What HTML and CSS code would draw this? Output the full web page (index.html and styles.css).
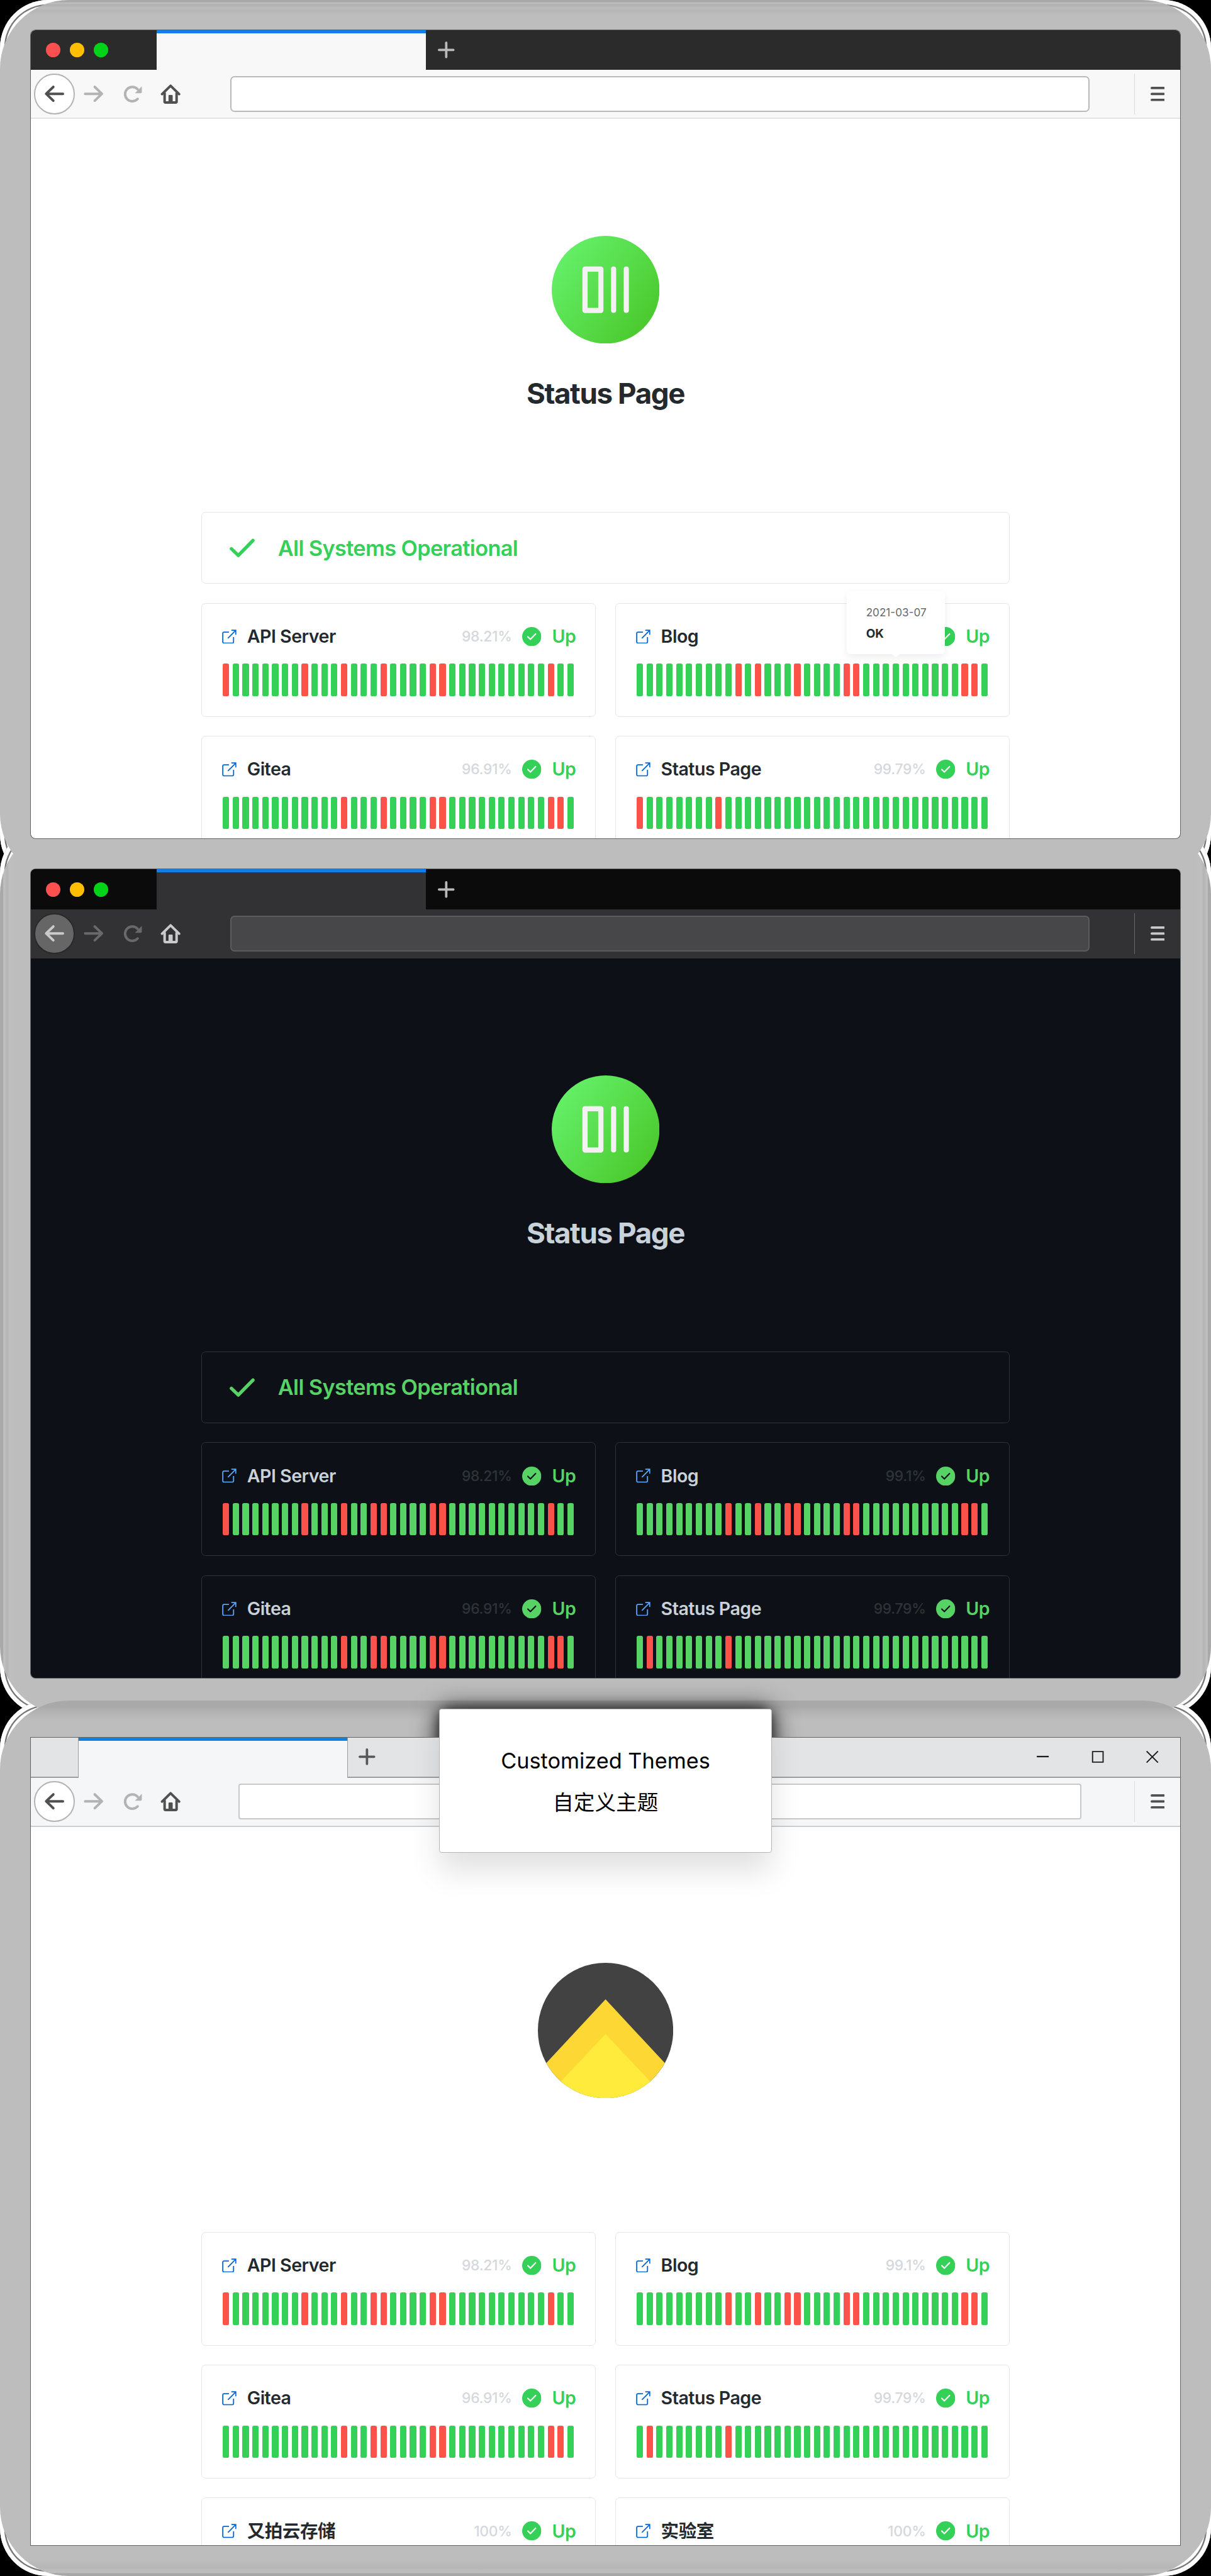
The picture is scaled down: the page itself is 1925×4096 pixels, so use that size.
FILE: index.html
```html
<!DOCTYPE html>
<html lang="en">
<head>
<meta charset="utf-8">
<title>Status Page</title>
<link rel="stylesheet" href="styles.css">
</head>
<body>
<svg class="defs" width="0" height="0">
  <defs>
    <linearGradient id="lime" x1="0.05" y1="0.2" x2="0.9" y2="0.85">
      <stop offset="0" stop-color="#64f069"/><stop offset="0.5" stop-color="#58dd4b"/><stop offset="1" stop-color="#4bc92d"/>
    </linearGradient>
    <clipPath id="disc"><circle cx="113" cy="113" r="113"/></clipPath>
    <symbol id="plus" viewBox="0 0 28 28"><path d="M14 2v24M2 14h24" fill="none" stroke="currentColor" stroke-width="4" stroke-linecap="round"/></symbol>
    <symbol id="back" viewBox="0 0 34 34"><path d="M15.500 5.500 3.500 17 15.500 28.500M4 17h27.500" fill="none" stroke="currentColor" stroke-width="4.200" stroke-linecap="round" stroke-linejoin="round"/></symbol>
    <symbol id="forward" viewBox="0 0 34 34"><path d="M18.500 5.500 30.500 17 18.500 28.500M30 17H2.500" fill="none" stroke="currentColor" stroke-width="4.200" stroke-linecap="round" stroke-linejoin="round"/></symbol>
    <symbol id="reload" viewBox="0 0 34 34"><path d="M25 9.500A12 12 0 1 0 25 25.500" fill="none" stroke="currentColor" stroke-width="4.200" stroke-linecap="round"/><path d="M32 4.500V14a2 2 0 0 1-2 2H20.500z" fill="currentColor"/></symbol>
    <symbol id="home" viewBox="0 0 34 34"><path d="M2.800 17.500 17 3.500 31.200 17.500" fill="none" stroke="currentColor" stroke-width="4.200" stroke-linecap="round" stroke-linejoin="round"/><path d="M7 15v15a1.500 1.500 0 0 0 1.500 1.500h17A1.500 1.500 0 0 0 27 30V15" fill="none" stroke="currentColor" stroke-width="4.200"/><path d="M13.500 31V20.500a1.500 1.500 0 0 1 1.500-1.500h4a1.500 1.500 0 0 1 1.500 1.500V31z" fill="currentColor"/></symbol>
    <symbol id="menu" viewBox="0 0 24 24"><path d="M2 2h20M2 12h20M2 22h20" fill="none" stroke="currentColor" stroke-width="4" stroke-linecap="round"/></symbol>
    <symbol id="external" viewBox="0 0 24 24"><path d="M11.500 4.300H3.500a2.300 2.300 0 0 0-2.300 2.300v13.900a2.300 2.300 0 0 0 2.300 2.300h13.400a2.300 2.300 0 0 0 2.300-2.300V12.500M9.800 14.600 22.800 1.500M15.500 1.200h7.500v7.500" fill="none" stroke="currentColor" stroke-width="1.900"/></symbol>
    <symbol id="tick" viewBox="0 0 42 32"><path d="M3 17.500 14.500 28.500 39 3.500" fill="none" stroke="currentColor" stroke-width="5.600" stroke-linecap="round" stroke-linejoin="round"/></symbol>
    <symbol id="badge" viewBox="0 0 32 32"><circle cx="16" cy="16" r="16" fill="currentColor"/><path d="M9.500 16.300 13.800 20.500 22.500 11.500" fill="none" stroke="var(--page)" stroke-width="2.300" stroke-linecap="round" stroke-linejoin="round"/></symbol>
    <symbol id="brand" viewBox="0 0 180 180"><circle cx="90" cy="90" r="90" fill="url(#lime)"/><rect x="55.600" y="55.600" width="26.400" height="69" fill="none" stroke="#f3f1f4" stroke-width="8.700" stroke-linejoin="round"/><path d="M103.300 55.500v69M124.500 55.500v69" stroke="#f3f1f4" stroke-width="8.600" stroke-linecap="round"/></symbol>
    <symbol id="peak" viewBox="0 0 226 226"><g clip-path="url(#disc)"><path d="M0 0h226v226H0z" fill="#424242"/><path d="M113 61 273 233H-47z" fill="#fdd835"/><path d="M113 119 223 236H3z" fill="#ffeb3b"/></g></symbol>
  </defs>
</svg>
<main>
  <section class="frame frame-first">
    <div class="window light">
      <div class="tabs">
        <div class="tabs-lead"><i class="dot red"></i><i class="dot amber"></i><i class="dot green"></i></div>
        <div class="tab"></div>
        <div class="tabs-rest"><svg class="plus"><use href="#plus"/></svg></div>
      </div>
      <div class="toolbar">
        <div class="nav"><span class="back"><svg><use href="#back"/></svg></span><svg class="dim"><use href="#forward"/></svg><svg class="dim"><use href="#reload"/></svg><svg><use href="#home"/></svg></div>
        <div class="address"></div>
        <div class="menu"><svg><use href="#menu"/></svg></div>
      </div>
      <div class="page">
        <svg class="logo"><use href="#brand"/></svg>
        <h1>Status Page</h1>
        <div class="summary"><svg><use href="#tick"/></svg><span>All Systems Operational</span></div>
        <div class="cards" data-set="recent"></div>
      </div>
    </div>
  </section>
  <section class="frame frame-middle">
    <div class="window dark">
      <div class="tabs">
        <div class="tabs-lead"><i class="dot red"></i><i class="dot amber"></i><i class="dot green"></i></div>
        <div class="tab"></div>
        <div class="tabs-rest"><svg class="plus"><use href="#plus"/></svg></div>
      </div>
      <div class="toolbar">
        <div class="nav"><span class="back"><svg><use href="#back"/></svg></span><svg class="dim"><use href="#forward"/></svg><svg class="dim"><use href="#reload"/></svg><svg><use href="#home"/></svg></div>
        <div class="address"></div>
        <div class="menu"><svg><use href="#menu"/></svg></div>
      </div>
      <div class="page">
        <svg class="logo"><use href="#brand"/></svg>
        <h1>Status Page</h1>
        <div class="summary"><svg><use href="#tick"/></svg><span>All Systems Operational</span></div>
        <div class="cards" data-set="full"></div>
      </div>
    </div>
  </section>
  <section class="frame frame-last">
    <div class="window light flat">
      <div class="tabs">
        <div class="tabs-lead"></div>
        <div class="tab"></div>
        <div class="tabs-rest"><svg class="plus"><use href="#plus"/></svg>
          <svg class="controls" viewBox="0 0 204 20"><path d="M0 9.500h20" stroke-width="2.400"/><path d="M93.200 1.200h17.600v17.600H93.200z"/><path d="M183.500 .500 202.500 19.500M202.500 .500 183.500 19.500"/></svg>
        </div>
      </div>
      <div class="toolbar">
        <div class="nav"><span class="back"><svg><use href="#back"/></svg></span><svg class="dim"><use href="#forward"/></svg><svg class="dim"><use href="#reload"/></svg><svg><use href="#home"/></svg></div>
        <div class="address"></div>
        <div class="menu"><svg><use href="#menu"/></svg></div>
      </div>
      <div class="page">
        <svg class="logo"><use href="#peak"/></svg>
        <div class="cards" data-set="full"></div>
      </div>
    </div>
    <div class="note"><p>Customized Themes</p><p class="zh">自定义主题</p></div>
  </section>
</main>
<script src="cards.js"></script>
</body>
</html>
```
FILE: styles.css
```css
/* 1rem is ten design units */
html { font-size: 9.5203px; }
* { box-sizing: border-box; margin: 0; }
body {
  background: #000;
  font-family: Inter, "Noto Sans CJK SC", sans-serif;
  width: 202.2rem;
  height: 4096px;
  overflow: hidden;
}
.defs { position: absolute; }
svg { display: block; flex: none; }
main {
  position: relative;
  z-index: 0;
  display: flex;
  flex-direction: column;
  padding: 5rem 5.1rem 0;
  height: 4096px;
}
.frame { position: relative; }
.frame-first { margin-bottom: 5.2rem; }
.frame-middle { margin-bottom: 10rem; }

/* halo round each window: a grey plate over a pale rim */
.frame::before, .frame::after {
  content: "";
  position: absolute;
  left: -5.1rem;
  right: -5.1rem;
  top: -6.2rem;
  bottom: -6.2rem;
}
.frame::after { z-index: -2; background: #fff; border-radius: 8rem; box-shadow: inset 0 0 0 .7rem #fff, inset 0 0 0 .95rem #777; }
.frame::before {
  z-index: -1;
  border-radius: 11.5rem;
  background:
    linear-gradient(to right, #aaa 0, #a8a8a8 .5rem, #c2c2c2 .6rem, #b4b4b4 1.2rem, #bfbfbf 1.6rem, rgba(189,189,189,0) 2.6rem, rgba(189,189,189,0) calc(100% - 2.6rem), #bfbfbf calc(100% - 1.6rem), #b4b4b4 calc(100% - 1.2rem), #c2c2c2 calc(100% - .6rem), #a8a8a8 calc(100% - .5rem), #aaa 100%),
    #bdbdbd;
}
.frame-first::before, .frame-first::after { top: -5rem; bottom: -7.4rem; }
.frame-middle::before, .frame-middle::after { top: -7.4rem; }
.frame-last::before, .frame-last::after { bottom: -5.1rem; }
.frame-first::before {
  background: linear-gradient(#a8a8a8 0, #a8a8a8 .3rem, #c0c0c0 .5rem, #b0b0b0 .8rem, #bcbcbc 1.3rem, #b6b6b6 1.8rem, #bdbdbd 2.6rem, #bdbdbd);
}
.frame-last::before {
  background: linear-gradient(#a9a9a9 1rem, #b2b2b2 1.8rem, #bdbdbd 3.4rem, #bdbdbd calc(100% - 2.6rem), #b6b6b6 calc(100% - 1.4rem), #c0c0c0 calc(100% - .6rem), #a8a8a8 calc(100% - .4rem));
}

.window {
  height: 135rem;
  overflow: hidden;
  background: var(--page);
  box-shadow: 0 0 0 1px #636363;
  border-radius: .8rem;
}
.flat { height: 134.9rem; border-radius: 0; }
.light {
  --page: #fff; --text: #24292e; --ok: #34d058; --bad: #fb524a; --line: #e3e5e8;
  --faint: #d5d8dc; --link: #0366d6; --strip: #2b2b2b; --bar: #f8f8f8; --edge: #e3e3e3;
  --field: #fff; --field-line: #b9b9b9; --icon: #505050; --icon-dim: #b3b3b3;
  --back: #fff; --back-line: #b3b3b3; --plus: #b9b9b9;
}
.dark {
  --page: #0d1117; --text: #c9d1d9; --ok: #56d364; --bad: #f9524a; --line: #2e3338;
  --faint: #2e3338; --link: #58a6ff; --strip: #0b0b0b; --bar: #323234; --edge: #323234;
  --field: #474749; --field-line: #5c5c5e; --icon: #cacaca; --icon-dim: #69696a;
  --back: #666; --back-line: #29292a; --plus: #b9b9b9;
}
.flat {
  --strip: #e2e4e5; --bar: #f5f6f8; --edge: #cdcdcd; --field-line: #c8c8c8; --plus: #57585a;
}

.tabs { display: flex; height: 6.7rem; }
.tabs-lead { width: 21.1rem; background: var(--strip); display: flex; align-items: center; gap: 1.6rem; padding-left: 2.6rem; }
.dot { width: 2.4rem; height: 2.4rem; border-radius: 50%; }
.red { background: #ff5050; }
.amber { background: #ffbf00; }
.green { background: #00d318; }
.tab { width: 44.9rem; background: var(--bar); border-top: 5px solid #1080e8; }
.tabs-rest { flex: 1; background: var(--strip); display: flex; align-items: center; justify-content: space-between; padding: 0 3.5rem 0 2rem; }
.plus { width: 2.8rem; height: 2.8rem; color: var(--plus); }
.controls { width: 20.4rem; height: 2rem; fill: none; stroke: #1c1c1c; stroke-width: 2; }
.flat .tabs-lead { width: 8rem; border-bottom: 2px solid #9a9fa2; border-right: 1px solid #9a9fa2; }
.flat .tabs-rest { border-bottom: 2px solid #9a9fa2; border-left: 1px solid #9a9fa2; padding-left: 1.8rem; padding-right: 3.6rem; }

.toolbar { display: flex; align-items: center; height: 8.2rem; background: var(--bar); border-bottom: 2px solid var(--edge); }
.nav { width: 33.3rem; display: flex; align-items: center; padding-left: .6rem; color: var(--icon); }
.nav svg { width: 3.4rem; height: 3.4rem; }
.nav > svg { margin-left: 2.95rem; }
.nav > .back + svg { margin-left: 1.5rem; }
.nav > .dim + .dim { margin-left: 3.05rem; }
.nav > .dim { color: var(--icon-dim); }
.back { width: 6.8rem; height: 6.8rem; border-radius: 50%; border: 2px solid var(--back-line); background: var(--back); display: flex; align-items: center; justify-content: center; }
.address { width: 143.5rem; height: 6rem; border: 2px solid var(--field-line); border-radius: .7rem; background: var(--field); }
.flat .nav { width: 34.7rem; }
.flat .address { width: 140.8rem; border-radius: .4rem; }
.menu { margin-left: auto; width: 7.75rem; height: 6.8rem; border-left: 1px solid #dadada; display: flex; align-items: center; justify-content: center; color: var(--icon); }
.dark .menu { border-color: #68686a; }
.menu svg { width: 2.4rem; height: 2.4rem; }

.page { width: 135rem; margin: 0 auto; display: flex; flex-direction: column; align-items: center; padding-top: 19.5rem; }
.logo { width: 18rem; height: 18rem; }
.flat .page { padding-top: 22.75rem; }
.flat .logo { width: 22.6rem; height: 22.6rem; margin-bottom: 22.3rem; }
h1 { font-size: 4.8rem; line-height: 5.8rem; font-weight: 700; letter-spacing: -.031em; color: var(--text); margin: 5.4rem 0 16.9rem; }
.summary { width: 100%; height: 12rem; border: 1px solid var(--line); border-radius: .7rem; display: flex; align-items: center; padding-left: 4.6rem; gap: 3.9rem; color: var(--ok); font-size: 3.6rem; font-weight: 600; letter-spacing: -.018em; margin-bottom: 3.2rem; }
.summary svg { width: 4.2rem; height: 3.2rem; }
.cards { width: 100%; display: grid; grid-template-columns: 1fr 1fr; gap: 3.2rem; }
.card { position: relative; height: 19rem; border: 1px solid var(--line); border-radius: .7rem; padding-top: 3.7rem; }
.card-head { height: 3.6rem; display: flex; align-items: center; padding: 0 3.25rem 0 3.4rem; font-size: 3rem; font-weight: 600; letter-spacing: -.017em; line-height: 3.6rem; color: var(--text); }
.card-head .ext { width: 2.4rem; height: 2.4rem; color: var(--link); margin-right: 1.75rem; }
.uptime { margin-left: auto; font-size: 2.4rem; font-weight: 500; letter-spacing: -.012em; color: var(--faint); }
.badge { width: 3.2rem; height: 3.2rem; margin: 0 1.75rem 0 1.75rem; color: var(--ok); }
.state { color: var(--ok); }
.bars { display: grid; grid-template-columns: repeat(36, 1fr); column-gap: .58rem; height: 5.4rem; margin: 2.75rem 3.6rem 0 3.5rem; }
.bars i { background: var(--ok); border-radius: .3rem; }
.bars .down { background: var(--bad); }

.tip { position: absolute; left: 38.6rem; top: -2.1rem; width: 16.4rem; height: 10.5rem; background: #fff; border-radius: .6rem; padding: 2.3rem 3.2rem; box-shadow: 0 .5rem 1.2rem rgba(0,0,0,.07); white-space: nowrap; }
.tip::after { content: ""; position: absolute; left: 7.3rem; top: 10.4rem; border: .9rem solid transparent; border-top: .7rem solid #fff; border-bottom: 0; }
.tip-date { font-size: 1.8rem; line-height: 2.6rem; color: #666a6e; }
.tip-text { font-size: 2rem; line-height: 2.6rem; font-weight: 700; color: #24292e; margin-top: 1.05rem; }

.note {
  position: absolute;
  left: 68.2rem;
  top: -4.8rem;
  width: 55.6rem;
  height: 24rem;
  background: #fff;
  border: 1px solid #b5b5b5;
  border-radius: .4rem;
  box-shadow: 0 3rem 5rem rgba(0,0,0,.12);
  padding-top: 6.1rem;
  text-align: center;
  color: #000;
  font-size: 3.6rem;
}
/* dark glow that stays behind the windows */
.note::before { content: ""; position: absolute; z-index: -1; inset: 0; border-radius: 2rem; box-shadow: 0 0 1.6rem .3rem rgba(30,30,30,.65), 0 .2rem 4rem .5rem rgba(0,0,0,.7); }
.note p { line-height: 5rem; }
.note .zh { line-height: 5rem; margin-top: 2rem; font-size: 3.5rem; letter-spacing: .01em; }
```
FILE: cards.js
```js
const services = {
  recent: [
    ["API Server", "98.21%", [0, 8, 12, 16, 21, 22, 33]],
    ["Blog", "99.1%", [10, 12, 16, 21, 22, 33, 34], ["2021-03-07", "OK"]],
    ["Gitea", "96.91%", [12, 16, 21, 22, 33, 34]],
    ["Status Page", "99.79%", [0, 8]],
  ],
  full: [
    ["API Server", "98.21%", [0, 8, 12, 15, 16, 21, 22, 33]],
    ["Blog", "99.1%", [9, 12, 15, 16, 21, 22, 33, 34]],
    ["Gitea", "96.91%", [12, 15, 16, 21, 22, 33, 34]],
    ["Status Page", "99.79%", [1, 9]],
    ["又拍云存储", "100%", []],
    ["实验室", "100%", []],
  ],
};

function card([name, uptime, down, tip]) {
  const bars = Array.from({ length: 36 }, (_, i) =>
    down.includes(i) ? '<i class="down"></i>' : "<i></i>").join("");
  const tooltip = tip
    ? `<div class="tip"><div class="tip-date">${tip[0]}</div><div class="tip-text">${tip[1]}</div></div>`
    : "";
  return `<article class="card">
    <div class="card-head">
      <svg class="ext"><use href="#external"/></svg><span>${name}</span>
      <span class="uptime">${uptime}</span>
      <svg class="badge"><use href="#badge"/></svg><span class="state">Up</span>
    </div>
    <div class="bars">${bars}</div>${tooltip}
  </article>`;
}

document.querySelectorAll(".cards").forEach((el) => {
  const rows = services[el.dataset.set];
  const visible = el.closest(".dark") ? rows.slice(0, 4) : rows;
  el.innerHTML = visible.map(card).join("");
});
```
